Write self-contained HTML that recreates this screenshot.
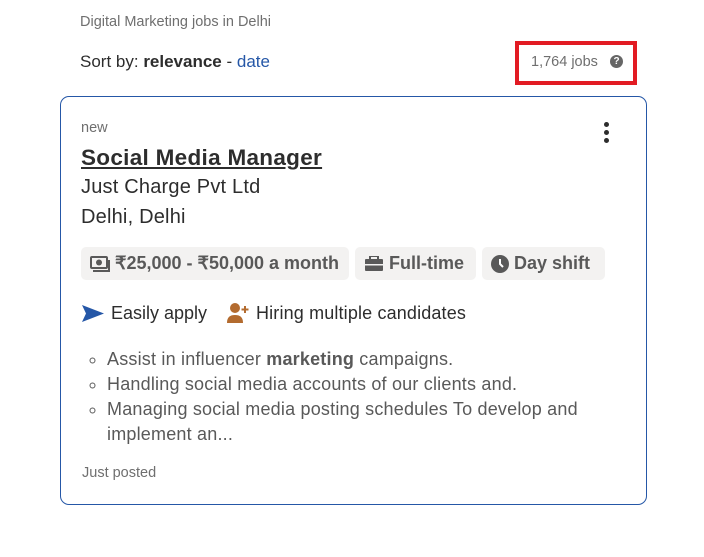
<!DOCTYPE html>
<html><head><meta charset="utf-8"><style>
body{margin:0;width:704px;height:557px;background:#fff;font-family:"Liberation Sans",sans-serif;position:relative;overflow:hidden;color:#2d2d2d}
.a{position:absolute;white-space:nowrap}
.pill{position:absolute;top:247px;height:33px;background:#f3f2f1;border-radius:5px;font-weight:bold;font-size:18px;color:#595959;line-height:33px;padding:0 9px;box-sizing:border-box;display:flex;align-items:center;gap:5px}
ul{position:absolute;left:82px;top:347px;margin:0;padding-left:25px;font-size:18px;color:#595959;line-height:25px;width:520px;list-style:circle;letter-spacing:0.2px}
</style></head><body>
<div class="a" style="left:80px;top:14px;font-size:14.5px;color:#6f6f6f">Digital Marketing jobs in Delhi</div>
<div class="a" style="left:80px;top:52px;font-size:17px;color:#2d2d2d">Sort by: <b>relevance</b> - <span style="color:#2557a7">date</span></div>
<div class="a" style="left:515px;top:41px;width:122px;height:44px;border:4px solid #e21b23;box-sizing:border-box"></div>
<div class="a" style="left:531px;top:54px;font-size:14.5px;color:#6f6f6f">1,764 jobs</div>
<div class="a" style="left:610px;top:55px;width:13px;height:13px;border-radius:50%;background:#666;color:#fff;font-size:10px;font-weight:bold;text-align:center;line-height:13px">?</div>
<div class="a" style="left:60px;top:96px;width:587px;height:409px;border:1px solid #2557a7;border-radius:9px;box-sizing:border-box"></div>
<div class="a" style="left:604px;top:122px;width:5px">
<div style="width:5px;height:5px;border-radius:50%;background:#2d2d2d;margin-bottom:3px"></div><div style="width:5px;height:5px;border-radius:50%;background:#2d2d2d;margin-bottom:3px"></div><div style="width:5px;height:5px;border-radius:50%;background:#2d2d2d"></div></div>
<div class="a" style="left:81px;top:120px;font-size:14.5px;color:#6f6f6f">new</div>
<div class="a" style="left:81px;top:145px;font-size:22.5px;font-weight:bold;text-decoration:underline;letter-spacing:0.3px">Social Media Manager</div>
<div class="a" style="left:81px;top:176px;font-size:20px;letter-spacing:0.2px">Just Charge Pvt Ltd</div>
<div class="a" style="left:81px;top:206px;font-size:20px;letter-spacing:0.2px">Delhi, Delhi</div>
<div class="pill" style="left:81px;width:268px"><svg width="20" height="16" viewBox="0 0 20 16"><rect x="1" y="1" width="16" height="11" rx="1" fill="none" stroke="#595959" stroke-width="2"/><circle cx="9" cy="6.5" r="3" fill="#595959"/><path d="M3 15h16V4" fill="none" stroke="#595959" stroke-width="2"/></svg>₹25,000 - ₹50,000 a month</div>
<div class="pill" style="left:355px;width:121px"><svg width="20" height="16" viewBox="0 0 20 16"><rect x="6" y="0" width="8" height="4" fill="none" stroke="#595959" stroke-width="2"/><rect x="1" y="3" width="18" height="12" rx="1" fill="#595959"/><rect x="1" y="8" width="18" height="1.5" fill="#f3f2f1"/></svg>Full-time</div>
<div class="pill" style="left:482px;width:123px"><svg width="18" height="18" viewBox="0 0 18 18"><circle cx="9" cy="9" r="9" fill="#595959"/><path d="M9 4v5l3 3" stroke="#fff" stroke-width="2" fill="none"/></svg>Day shift</div>
<svg class="a" style="left:82px;top:305px" width="22" height="17" viewBox="0 0 22 17"><path d="M0 0L22 8.5L0 17L4 8.5Z" fill="#2557a7"/></svg>
<div class="a" style="left:111px;top:303px;font-size:18px">Easily apply</div>
<svg class="a" style="left:227px;top:303px" width="22" height="20" viewBox="0 0 22 20"><circle cx="8" cy="5" r="5" fill="#b36b2f"/><path d="M0 20c0-6 3-8 8-8s8 2 8 8z" fill="#b36b2f"/><path d="M18 3v7M14.5 6.5h7" stroke="#b36b2f" stroke-width="2"/></svg>
<div class="a" style="left:256px;top:303px;font-size:18px;letter-spacing:0.15px">Hiring multiple candidates</div>
<ul><li>Assist in influencer <b>marketing</b> campaigns.</li><li>Handling social media accounts of our clients and.</li><li>Managing social media posting schedules To develop and implement an...</li></ul>
<div class="a" style="left:82px;top:465px;font-size:14.5px;color:#6f6f6f">Just posted</div>
</body></html>
